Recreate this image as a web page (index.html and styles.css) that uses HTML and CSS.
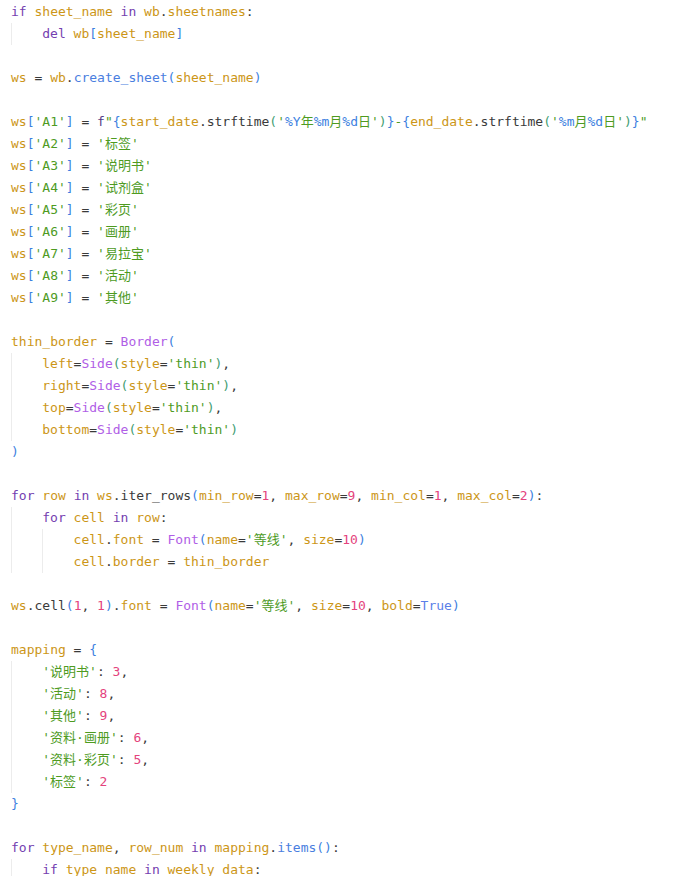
FILE: index.html
```html
<!DOCTYPE html>
<html>
<head>
<meta charset="utf-8">
<link rel="stylesheet" href="styles.css">
</head>
<body>
<div class="code">
<div class="ln"><span class="k">if</span> <span class="v">sheet_name</span> <span class="k">in</span> <span class="v">wb</span>.<span class="v">sheetnames</span>:</div>
<div class="blk">
<div class="ln"><span class="k">del</span> <span class="v">wb</span><span class="b1">[</span><span class="v">sheet_name</span><span class="b1">]</span></div>
</div>
<div class="ln"></div>
<div class="ln"><span class="v">ws</span> = <span class="v">wb</span>.<span class="f">create_sheet</span><span class="b1">(</span><span class="v">sheet_name</span><span class="b1">)</span></div>
<div class="ln"></div>
<div class="ln"><span class="v">ws</span><span class="b1">[</span><span class="s">'A1'</span><span class="b1">]</span> = <span class="fp">f</span><span class="s">"</span><span class="b1">{</span><span class="v">start_date</span>.strftime<span class="b2">(</span><span class="s">'</span><span class="fm">%Y</span><span class="s">年</span><span class="fm">%m</span><span class="s">月</span><span class="fm">%d</span><span class="s">日'</span><span class="b2">)</span><span class="b1">}</span><span class="s">-</span><span class="b1">{</span><span class="v">end_date</span>.strftime<span class="b2">(</span><span class="s">'</span><span class="fm">%m</span><span class="s">月</span><span class="fm">%d</span><span class="s">日'</span><span class="b2">)</span><span class="b1">}</span><span class="s">"</span></div>
<div class="ln"><span class="v">ws</span><span class="b1">[</span><span class="s">'A2'</span><span class="b1">]</span> = <span class="s">'标签'</span></div>
<div class="ln"><span class="v">ws</span><span class="b1">[</span><span class="s">'A3'</span><span class="b1">]</span> = <span class="s">'说明书'</span></div>
<div class="ln"><span class="v">ws</span><span class="b1">[</span><span class="s">'A4'</span><span class="b1">]</span> = <span class="s">'试剂盒'</span></div>
<div class="ln"><span class="v">ws</span><span class="b1">[</span><span class="s">'A5'</span><span class="b1">]</span> = <span class="s">'彩页'</span></div>
<div class="ln"><span class="v">ws</span><span class="b1">[</span><span class="s">'A6'</span><span class="b1">]</span> = <span class="s">'画册'</span></div>
<div class="ln"><span class="v">ws</span><span class="b1">[</span><span class="s">'A7'</span><span class="b1">]</span> = <span class="s">'易拉宝'</span></div>
<div class="ln"><span class="v">ws</span><span class="b1">[</span><span class="s">'A8'</span><span class="b1">]</span> = <span class="s">'活动'</span></div>
<div class="ln"><span class="v">ws</span><span class="b1">[</span><span class="s">'A9'</span><span class="b1">]</span> = <span class="s">'其他'</span></div>
<div class="ln"></div>
<div class="ln"><span class="v">thin_border</span> = <span class="c">Border</span><span class="b1">(</span></div>
<div class="blk">
<div class="ln"><span class="v">left</span>=<span class="c">Side</span><span class="b2">(</span><span class="v">style</span>=<span class="s">'thin'</span><span class="b2">)</span>,</div>
<div class="ln"><span class="v">right</span>=<span class="c">Side</span><span class="b2">(</span><span class="v">style</span>=<span class="s">'thin'</span><span class="b2">)</span>,</div>
<div class="ln"><span class="v">top</span>=<span class="c">Side</span><span class="b2">(</span><span class="v">style</span>=<span class="s">'thin'</span><span class="b2">)</span>,</div>
<div class="ln"><span class="v">bottom</span>=<span class="c">Side</span><span class="b2">(</span><span class="v">style</span>=<span class="s">'thin'</span><span class="b2">)</span></div>
</div>
<div class="ln"><span class="b1">)</span></div>
<div class="ln"></div>
<div class="ln"><span class="k">for</span> <span class="v">row</span> <span class="k">in</span> <span class="v">ws</span>.iter_rows<span class="b1">(</span><span class="v">min_row</span>=<span class="n">1</span>, <span class="v">max_row</span>=<span class="n">9</span>, <span class="v">min_col</span>=<span class="n">1</span>, <span class="v">max_col</span>=<span class="n">2</span><span class="b1">)</span>:</div>
<div class="blk">
<div class="ln"><span class="k">for</span> <span class="v">cell</span> <span class="k">in</span> <span class="v">row</span>:</div>
<div class="blk">
<div class="ln"><span class="v">cell</span>.<span class="v">font</span> = <span class="c">Font</span><span class="b1">(</span><span class="v">name</span>=<span class="s">'等线'</span>, <span class="v">size</span>=<span class="n">10</span><span class="b1">)</span></div>
<div class="ln"><span class="v">cell</span>.<span class="v">border</span> = <span class="v">thin_border</span></div>
</div>
</div>
<div class="ln"></div>
<div class="ln"><span class="v">ws</span>.cell<span class="b1">(</span><span class="n">1</span>, <span class="n">1</span><span class="b1">)</span>.<span class="v">font</span> = <span class="c">Font</span><span class="b1">(</span><span class="v">name</span>=<span class="s">'等线'</span>, <span class="v">size</span>=<span class="n">10</span>, <span class="v">bold</span>=<span class="t">True</span><span class="b1">)</span></div>
<div class="ln"></div>
<div class="ln"><span class="v">mapping</span> = <span class="b1">{</span></div>
<div class="blk">
<div class="ln"><span class="s">'说明书'</span>: <span class="n">3</span>,</div>
<div class="ln"><span class="s">'活动'</span>: <span class="n">8</span>,</div>
<div class="ln"><span class="s">'其他'</span>: <span class="n">9</span>,</div>
<div class="ln"><span class="s">'资料·画册'</span>: <span class="n">6</span>,</div>
<div class="ln"><span class="s">'资料·彩页'</span>: <span class="n">5</span>,</div>
<div class="ln"><span class="s">'标签'</span>: <span class="n">2</span></div>
</div>
<div class="ln"><span class="b1">}</span></div>
<div class="ln"></div>
<div class="ln"><span class="k">for</span> <span class="v">type_name</span>, <span class="v">row_num</span> <span class="k">in</span> <span class="v">mapping</span>.<span class="f">items</span><span class="b1">()</span>:</div>
<div class="blk">
<div class="ln"><span class="k">if</span> <span class="v">type_name</span> <span class="k">in</span> <span class="v">weekly_data</span>:</div>
</div>
</div>
</body>
</html>
```
FILE: styles.css
```css
html, body {
  margin: 0;
  padding: 0;
  background: #ffffff;
}
.code {
  font-family: "DejaVu Sans Mono", "Noto Sans CJK SC", monospace;
  font-size: 13px;
  line-height: 22px;
  color: #3a3a3a;
  padding-left: 11px;
  padding-top: 1px;
}
.ln {
  white-space: pre;
  height: 22px;
}
.blk {
  border-left: 1px solid #ececec;
  padding-left: calc(4ch - 1px);
}
.k { color: #7440b0; }
.v { color: #cc9617; }
.s { color: #4e9b1f; }
.n { color: #e4437d; }
.c { color: #b05ee6; }
.f { color: #4a7ee0; }
.t { color: #5a7fe8; }
.b1 { color: #3d7fe0; }
.b2 { color: #3f9d72; }
.fm { color: #3d7fe0; }
.fp { color: #553d85; }
```
